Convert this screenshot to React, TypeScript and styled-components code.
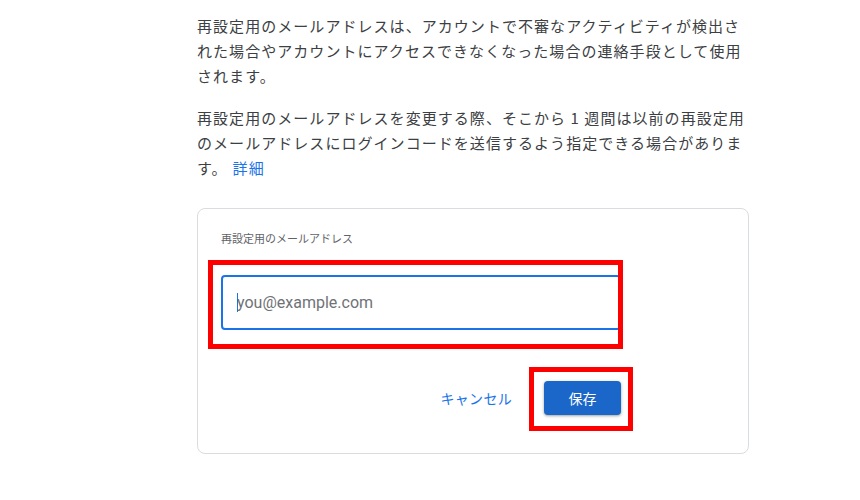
import React from "react";
import styled, { createGlobalStyle } from "styled-components";

const Global = createGlobalStyle`
  html, body { margin: 0; padding: 0; background: #ffffff; }
  body { font-family: "Noto Sans CJK JP", "Noto Sans", sans-serif; }
`;

const Page = styled.div`
  width: 860px;
  height: 500px;
  box-sizing: border-box;
  padding: 12.5px 0 0 197px;
`;

const Column = styled.div`
  width: 552px;
  display: flex;
  flex-direction: column;
`;

const Para = styled.p`
  margin: 0 0 17px 0;
  font-size: 15px;
  line-height: 25px;
  color: #3c4043;
  letter-spacing: 1.05px;
  text-spacing-trim: space-all;
  &:last-of-type { margin-bottom: 0; }
`;

const Link = styled.a`
  color: #1a73e8;
  text-decoration: none;
  margin-left: 5px;
`;

const Card = styled.div`
  margin-top: 28.5px;
  border: 1px solid #dadce0;
  border-radius: 8px;
  padding: 21px 23px 38px 23px;
  display: flex;
  flex-direction: column;
`;

const Form = styled.div`
  width: 400px;
  display: flex;
  flex-direction: column;
`;

const Label = styled.div`
  font-size: 11px;
  line-height: 16px;
  color: #5f6368;
  margin-bottom: 29px;
`;

const Highlight = styled.div`
  position: relative;
`;

const Frame = styled.div<{ $t: number; $r: number; $b: number; $l: number }>`
  position: absolute;
  top: ${(p) => p.$t}px;
  right: ${(p) => p.$r}px;
  bottom: ${(p) => p.$b}px;
  left: ${(p) => p.$l}px;
  border: 5px solid #ff0000;
  pointer-events: none;
`;

const InputBox = styled.div`
  height: 55px;
  box-sizing: border-box;
  border: 2px solid #1a73e8;
  border-radius: 4px;
  display: flex;
  align-items: center;
  padding-left: 14px;
`;

const Caret = styled.span`
  width: 1px;
  height: 19px;
  margin-right: -1px;
  background: #1a73e8;
`;

const Placeholder = styled.span`
  font-family: Roboto, "Noto Sans", sans-serif;
  font-size: 16px;
  color: #6f7276;
`;

const Actions = styled.div`
  margin-top: 50px;
  display: flex;
  justify-content: flex-end;
  align-items: center;
  gap: 24px;
`;

const TextButton = styled.button`
  border: none;
  background: none;
  padding: 0 8px;
  height: 35px;
  font-family: "Noto Sans CJK JP", sans-serif;
  font-size: 14px;
  letter-spacing: 0.3px;
  color: #1a73e8;
`;

const FilledButton = styled.button`
  border: none;
  border-radius: 4px;
  background: #1a66c9;
  color: #ffffff;
  width: 77px;
  height: 34px;
  font-family: "Noto Sans CJK JP", sans-serif;
  font-size: 14px;
  box-shadow: 0 1px 2px rgba(60, 64, 67, 0.3), 0 1px 3px 1px rgba(60, 64, 67, 0.15);
`;

export default function App() {
  return (
    <Page>
      <Global />
      <Column>
        <Para>
          再設定用のメールアドレスは、アカウントで不審なアクティビティが検出された場合やアカウントにアクセスできなくなった場合の連絡手段として使用されます。
        </Para>
        <Para>
          再設定用のメールアドレスを変更する際、そこから 1 週間は以前の再設定用のメールアドレスにログインコードを送信するよう指定できる場合があります。
          <Link href="#">詳細</Link>
        </Para>
        <Card>
          <Form>
            <Label>再設定用のメールアドレス</Label>
            <Highlight>
              <InputBox>
                <Caret />
                <Placeholder>you@example.com</Placeholder>
              </InputBox>
              <Frame $t={-15} $r={-2} $b={-19} $l={-13} />
            </Highlight>
            <Actions>
              <TextButton>キャンセル</TextButton>
              <Highlight>
                <FilledButton>保存</FilledButton>
                <Frame $t={-14} $r={-12} $b={-16} $l={-15} />
              </Highlight>
            </Actions>
          </Form>
        </Card>
      </Column>
    </Page>
  );
}
